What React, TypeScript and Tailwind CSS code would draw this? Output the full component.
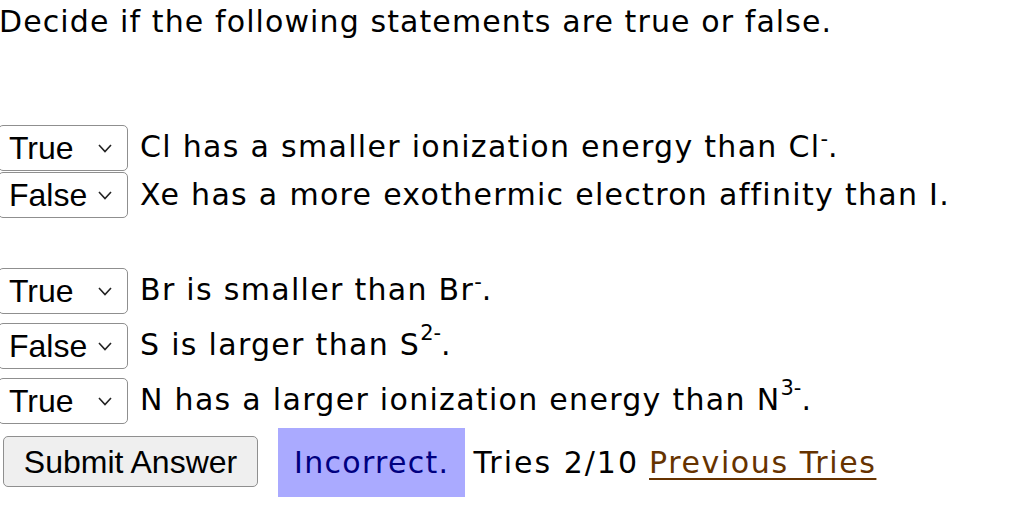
import React from 'react';

const sans = "font-['DejaVu_Sans',Verdana,sans-serif]";
const ui = "font-['Liberation_Sans',Arial,Helvetica,sans-serif]";

interface RowProps {
  value: string;
  children: React.ReactNode;
}

const Chevron = () => (
  <svg
    className="pointer-events-none absolute right-[16px] top-[19px]"
    width="14"
    height="9"
    viewBox="0 0 14 9"
    fill="none"
  >
    <polyline points="1,1 7,7.5 13,1" stroke="#222" strokeWidth="1.6" />
  </svg>
);

const Row: React.FC<RowProps> = ({ value, children }) => (
  <div className="flex items-center h-[46px]">
    <div className="relative -ml-[2px] shrink-0">
      <select
        defaultValue={value}
        className={`${ui} appearance-none w-[130px] h-[46px] pl-[10px] bg-white border border-[#8f8f8f] rounded-[5px] text-[32px] tracking-normal text-black outline-none`}
      >
        <option value="Select">Select</option>
        <option value="True">True</option>
        <option value="False">False</option>
      </select>
      <Chevron />
    </div>
    <span className="ml-[12px] whitespace-nowrap">{children}</span>
  </div>
);

// superscript charges are nudged up with relative offsets so the line box keeps its height
const Minus = () => <span className="relative -top-[11px] text-[21px] tracking-normal">-</span>;

const Charge = ({ n }: { n: string }) => (
  <span className="relative -top-[15px] text-[21px] tracking-normal">{n}-</span>
);

export default function App() {
  return (
    <div className={`${sans} w-[1024px] h-[526px] overflow-hidden bg-white text-black text-[30px] leading-[34px] tracking-[1.3px]`}>
      <p className="-ml-[1px] pt-[5px] whitespace-nowrap tracking-[1.1px]">Decide if the following statements are true or false.</p>

      <div className="mt-[86px] flex flex-col gap-[1px]">
        <Row value="True">
          Cl has a smaller ionization energy than Cl<Minus />.
        </Row>
        <Row value="False">Xe has a more exothermic electron affinity than I.</Row>
      </div>

      <div className="mt-[50px] flex flex-col gap-[9px]">
        <Row value="True">
          Br is smaller than Br<Minus />.
        </Row>
        <Row value="False">
          S is larger than S<Charge n="2" />.
        </Row>
        <Row value="True">
          N has a larger ionization energy than N<Charge n="3" />.
        </Row>
      </div>

      <div className="mt-[4px] flex items-start">
        <button
          className={`${ui} ml-[3px] mt-[8px] w-[255px] h-[51px] bg-[#efefef] border border-[#8f8f8f] rounded-[5px] text-[32px] tracking-normal text-black`}
        >
          Submit Answer
        </button>
        <div className="ml-[20px] h-[69px] px-[16px] flex items-center bg-[#aaaaff] text-[#000080] whitespace-nowrap">
          Incorrect.
        </div>
        <span className="self-center ml-[8px] whitespace-nowrap tracking-[2px]">Tries 2/10</span>
        <a href="#" className="self-center ml-[10px] whitespace-nowrap tracking-[1.6px] text-[#663300] underline underline-offset-[5px] decoration-[2px]">
          Previous Tries
        </a>
      </div>
    </div>
  );
}
